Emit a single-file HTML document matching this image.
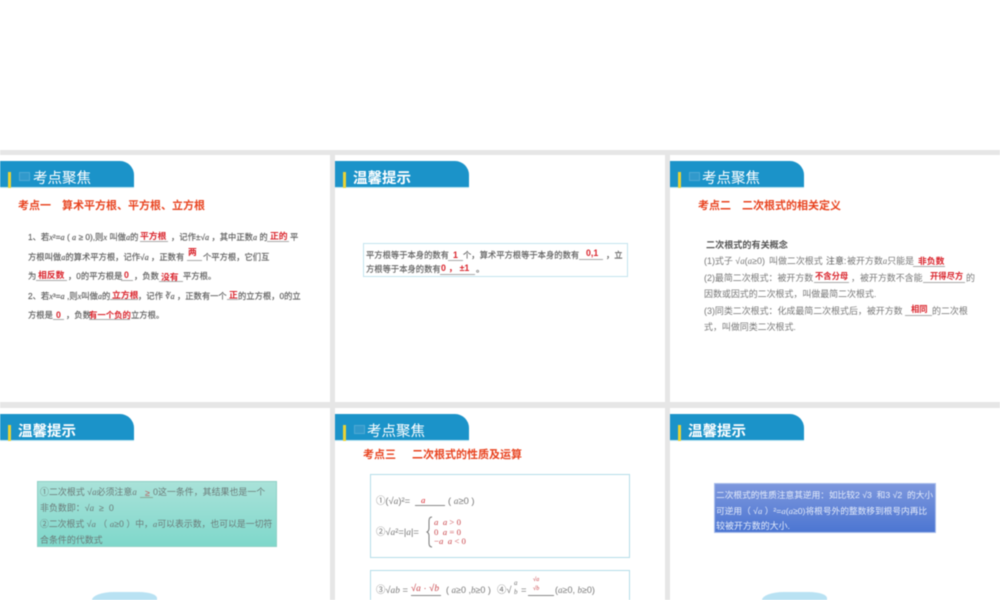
<!DOCTYPE html>
<html lang="zh"><head><meta charset="utf-8">
<style>
html,body{margin:0;padding:0;background:#fff}
body{width:1000px;height:600px;overflow:hidden;position:relative;font-family:"Liberation Sans","Noto Sans CJK SC",sans-serif}
.g{position:absolute;background:#e6e6e6}
.p{position:absolute;background:#fff;overflow:hidden}
.tab{position:absolute;left:0;top:5.5px;width:134px;height:27.5px;background:#1b93c9;border-radius:0 14px 0 0;border-bottom:1px solid #bfe6f3;box-sizing:border-box}
.bar{position:absolute;left:8px;top:17px;width:3px;height:16px;background:#e9d335}
.tt{position:absolute;top:14.5px;font-size:14.5px;line-height:18px;color:#fff;white-space:nowrap}
.bk{position:absolute;left:19px;top:17px;width:11px;height:9px;background:#3199cb;border:1px solid #4fa9d4;box-sizing:border-box}
.h{position:absolute;font-size:11px;line-height:14px;font-weight:700;color:#e8431f;white-space:nowrap}
.t{position:absolute;white-space:nowrap;line-height:12px;font-size:8.3px;color:#5c5c5c;-webkit-text-stroke:.15px #5c5c5c}
.t2{font-size:8.95px;color:#777;line-height:14px;-webkit-text-stroke:0}
.u{position:absolute;height:1px;background:#a9a9a9}
.box{position:absolute;box-sizing:border-box}
.a{position:absolute;white-space:nowrap;color:#d9232b;font-weight:700;line-height:12px;font-size:8.8px}
i{font-family:"Liberation Serif",serif}
.m{font-size:9.4px;color:#777;-webkit-text-stroke:0}
.blob{position:absolute;left:92px;top:184px;width:65px;height:10px;background:#b9e2f3;border-radius:22px 18px 0 0/8px 6px 0 0}
.all{position:absolute;inset:0;filter:blur(.4px)}
</style></head><body>
<div class="all">
<div class="g" style="left:0;top:150px;width:1000px;height:5px"></div>
<div class="g" style="left:0;top:402px;width:1000px;height:6px"></div>
<div class="g" style="left:330px;top:150px;width:5px;height:450px"></div>
<div class="g" style="left:665px;top:150px;width:5px;height:450px"></div>

<!-- panel 1 -->
<div class="p" style="left:0;top:155px;width:330px;height:247px">
<div class="tab"></div><div class="bar"></div><div class="bk"></div>
<div class="tt" style="left:33px">考点聚焦</div>
<div class="h" style="left:18px;top:43.5px">考点一　算术平方根、平方根、立方根</div>
<div class="t" style="left:28px;top:76px">1、若<i>x</i>²=<i>a</i> ( <i>a</i> ≥ 0),则<i>x</i> 叫做<i>a</i>的</div>
<div class="a" style="left:140px;top:75px">平方根</div>
<div class="t" style="left:171px;top:76px">，记作±√<i>a</i> ，其中正数<i>a</i> 的</div>
<div class="a" style="left:270px;top:75px">正的</div>
<div class="t" style="left:290px;top:76px">平</div>
<div class="t" style="left:28px;top:95.5px">方根叫做<i>a</i>的算术平方根，记作√<i>a</i> ，正数有</div>
<div class="a" style="left:188px;top:91px">两</div>
<div class="t" style="left:203px;top:95.5px">个平方根，它们互</div>
<div class="t" style="left:28px;top:115px">为</div>
<div class="a" style="left:38px;top:114px">相反数</div>
<div class="t" style="left:68px;top:115px">，0的平方根是</div>
<div class="a" style="left:124px;top:114px">0</div>
<div class="t" style="left:134px;top:115px">，负数</div>
<div class="a" style="left:161px;top:116px">没有</div>
<div class="t" style="left:183px;top:115px">平方根。</div>
<div class="t" style="left:28px;top:134.5px">2、若<i>x</i>³=<i>a</i> ,则<i>x</i>叫做<i>a</i>的</div>
<div class="a" style="left:112px;top:134px">立方根</div>
<div class="t" style="left:138px;top:134.5px">，记作 ∛<i>a</i> ，正数有一个</div>
<div class="a" style="left:229px;top:134px">正</div>
<div class="t" style="left:238px;top:134.5px">的立方根，0的立</div>
<div class="t" style="left:28px;top:154px">方根是</div>
<div class="a" style="left:56px;top:154px">0</div>
<div class="t" style="left:66px;top:154px">，负数</div>
<div class="a" style="left:89px;top:154px;font-size:8.4px">有一个负的</div>
<div class="t" style="left:131px;top:154px">立方根。</div>
<div class="u" style="left:140px;top:86px;width:28px"></div><div class="u" style="left:267px;top:86px;width:22px"></div>
<div class="u" style="left:187px;top:104.5px;width:15px"></div>
<div class="u" style="left:36px;top:124.5px;width:31px"></div><div class="u" style="left:121px;top:124.5px;width:12px"></div><div class="u" style="left:159px;top:125.5px;width:24px"></div>
<div class="u" style="left:110px;top:143.5px;width:28px"></div><div class="u" style="left:227px;top:143.5px;width:11px"></div>
<div class="u" style="left:53px;top:163.5px;width:11px"></div><div class="u" style="left:89px;top:163.5px;width:41px"></div>
</div>

<!-- panel 2 -->
<div class="p" style="left:335px;top:155px;width:330px;height:247px">
<div class="tab"></div><div class="bar"></div>
<div class="tt" style="left:18px;font-weight:700">温馨提示</div>
<div class="box" style="left:27.5px;top:88px;width:265.5px;height:33.5px;border:1px solid #c3e3ee"></div>
<div class="t" style="left:31px;top:94px">平方根等于本身的数有</div>
<div class="a" style="left:118px;top:94px">1</div><div class="u" style="left:113px;top:105px;width:15px"></div>
<div class="t" style="left:128px;top:94px">个，算术平方根等于本身的数有</div>
<div class="a" style="left:251px;top:92px">0,1</div><div class="u" style="left:244px;top:104px;width:24px"></div>
<div class="t" style="left:271px;top:94px">，立</div>
<div class="t" style="left:31px;top:108px">方根等于本身的数有</div>
<div class="a" style="left:106px;top:107px">0 ，&nbsp;±1</div><div class="u" style="left:105px;top:119px;width:35px"></div>
<div class="t" style="left:141px;top:108px">。</div>
</div>

<!-- panel 3 -->
<div class="p" style="left:670px;top:155px;width:330px;height:247px">
<div class="tab"></div><div class="bar"></div><div class="bk"></div>
<div class="tt" style="left:32px">考点聚焦</div>
<div class="h" style="left:28px;top:43.5px">考点二　二次根式的相关定义</div>
<div class="t" style="left:36px;top:84px;font-weight:700;font-size:9.1px;color:#555;-webkit-text-stroke:0">二次根式的有关概念</div>
<div class="t t2" style="left:34px;top:99px">(1)式子 √<i>a</i>(<i>a</i>≥0)</div>
<div class="t t2" style="left:99px;top:99px">叫做二次根式</div>
<div class="t t2" style="left:156px;top:99px;color:#555">注意:</div>
<div class="t t2" style="left:177px;top:99px">被开方数<i>a</i>只能是</div>
<div class="a" style="left:248px;top:100px">非负数</div><div class="u" style="left:243px;top:110.5px;width:32px"></div>
<div class="t t2" style="left:34px;top:116px">(2)最简二次根式：被开方数</div>
<div class="a" style="left:145px;top:114.5px;font-size:8.3px">不含分母</div><div class="u" style="left:144px;top:126.5px;width:35px"></div>
<div class="t t2" style="left:181px;top:116px">，被开方数不含能</div>
<div class="a" style="left:260px;top:114.5px;font-size:8.3px">开得尽方</div><div class="u" style="left:253px;top:126.5px;width:42px"></div>
<div class="t t2" style="left:296px;top:116px">的</div>
<div class="t t2" style="left:34px;top:132px">因数或因式的二次根式，叫做最简二次根式.</div>
<div class="t t2" style="left:34px;top:149px">(3)同类二次根式：化成最简二次根式后，被开方数</div>
<div class="a" style="left:241px;top:148px;font-size:8.3px">相同</div><div class="u" style="left:235px;top:159.5px;width:27px"></div>
<div class="t t2" style="left:262px;top:149px">的二次根</div>
<div class="t t2" style="left:34px;top:165px">式，叫做同类二次根式.</div>
</div>

<!-- panel 4 -->
<div class="p" style="left:0;top:408px;width:330px;height:192px">
<div class="tab"></div><div class="bar"></div>
<div class="tt" style="left:18px;font-weight:700">温馨提示</div>
<div class="box" style="left:37px;top:73px;width:240px;height:66px;background:linear-gradient(#a9e2d9,#7fd8cb);border:1px solid #8fd0c6"></div>
<div class="t t2" style="left:40px;top:77px;color:#6b7a78">①二次根式 √<i>a</i>必须注意<i>a</i></div>
<div class="a" style="left:145px;top:79px;font-weight:400;color:#b55">≥</div><div class="u" style="left:140px;top:88.7px;width:13px;background:#8a9"></div>
<div class="t t2" style="left:153px;top:77px;color:#6b7a78">0这一条件，其结果也是一个</div>
<div class="t t2" style="left:40px;top:93px;color:#6b7a78">非负数即：√<i>a</i> &nbsp;≥ &nbsp;0</div>
<div class="t t2" style="left:40px;top:109px;color:#6b7a78;font-size:8.85px">②二次根式 √<i>a</i> （ <i>a</i>≥0 ）中，<i>a</i>可以表示数，也可以是一切符</div>
<div class="t t2" style="left:40px;top:125px;color:#6b7a78">合条件的代数式</div>
<div class="blob"></div>
</div>

<!-- panel 5 -->
<div class="p" style="left:335px;top:408px;width:330px;height:192px">
<div class="tab"></div><div class="bar"></div><div class="bk"></div>
<div class="tt" style="left:32px">考点聚焦</div>
<div class="h" style="left:28px;top:39.5px">考点三<span style="display:inline-block;width:16px"></span>二次根式的性质及运算</div>
<div class="box" style="left:35px;top:66px;width:260px;height:84px;border:1px solid #b4dde9"></div>
<div class="box" style="left:35px;top:162px;width:260px;height:40px;border:1px solid #b4dde9"></div>
<div class="t m" style="left:41px;top:87px">①(√<i>a</i>)²=</div>
<div class="a" style="left:86px;top:86px;font-weight:400;font-family:'Liberation Serif',serif;font-style:italic">a</div><div class="u" style="left:80px;top:97px;width:30px;background:#888"></div>
<div class="t m" style="left:113px;top:87px">( <i>a</i>≥0 )</div>
<div class="t m" style="left:41px;top:117.5px">②√<i>a</i>²=|<i>a</i>|=</div>
<svg style="position:absolute;left:91px;top:108px" width="8" height="32" viewBox="0 0 8 32"><path d="M6 1Q3 1 3 5V12Q3 15 1 16Q3 17 3 20V27Q3 31 6 31" fill="none" stroke="#777" stroke-width="1"/></svg>
<div class="t" style="left:99px;top:110px;font-size:8.8px;line-height:9.6px;color:#c9454b;-webkit-text-stroke:0;font-family:'Liberation Serif',serif"><i>a</i> &nbsp;<i>a</i> &gt; 0<br>0 &nbsp;<i>a</i> = 0<br>−<i>a</i> &nbsp;<i>a</i> &lt; 0</div>
<div class="t m" style="left:41px;top:176px">③√<i>ab</i> =</div>
<div class="t m" style="left:76px;top:174px;color:#c9454b">√<i>a</i> · √<i>b</i></div><div class="u" style="left:76px;top:186.5px;width:30px;background:#888"></div>
<div class="t m" style="left:111px;top:176px;font-size:9px">( <i>a</i>≥0 ,<i>b</i>≥0 )</div>
<div class="t m" style="left:162px;top:176px">④√</div>
<div class="t" style="left:179px;top:171px;font-size:7px;line-height:9px;color:#777;-webkit-text-stroke:0;text-align:center"><i>a</i><br><i>b</i></div>
<div class="t m" style="left:186px;top:176px">=</div>
<div class="t" style="left:198px;top:168px;font-size:6px;line-height:9px;color:#c9454b;-webkit-text-stroke:0;text-align:center">√<i>a</i><br>√<i>b</i></div><div class="u" style="left:193px;top:186.5px;width:26px;background:#888"></div>
<div class="t m" style="left:220px;top:176px;font-size:9px">(<i>a</i>≥0, <i>b</i>≥0)</div>
</div>

<!-- panel 6 -->
<div class="p" style="left:670px;top:408px;width:330px;height:192px">
<div class="tab"></div><div class="bar"></div>
<div class="tt" style="left:18px;font-weight:700">温馨提示</div>
<div class="box" style="left:43.5px;top:75px;width:222px;height:50px;background:linear-gradient(#7d97dd,#4c76d2);border:1px solid #a8bdeb"></div>
<div class="t t2" style="left:46px;top:79.5px;font-size:8.7px;color:#e4ebfa">二次根式的性质注意其逆用：如比较2 √3 &nbsp;和3 √2 &nbsp;的大小</div>
<div class="t t2" style="left:46px;top:95.5px;font-size:8.7px;color:#e4ebfa">可逆用（ √<i>a</i> ）²=<i>a</i>(<i>a</i>≥0)将根号外的整数移到根号内再比</div>
<div class="t t2" style="left:46px;top:111px;color:#e4ebfa">较被开方数的大小.</div>
<div class="blob"></div>
</div>
</div>
</body></html>
